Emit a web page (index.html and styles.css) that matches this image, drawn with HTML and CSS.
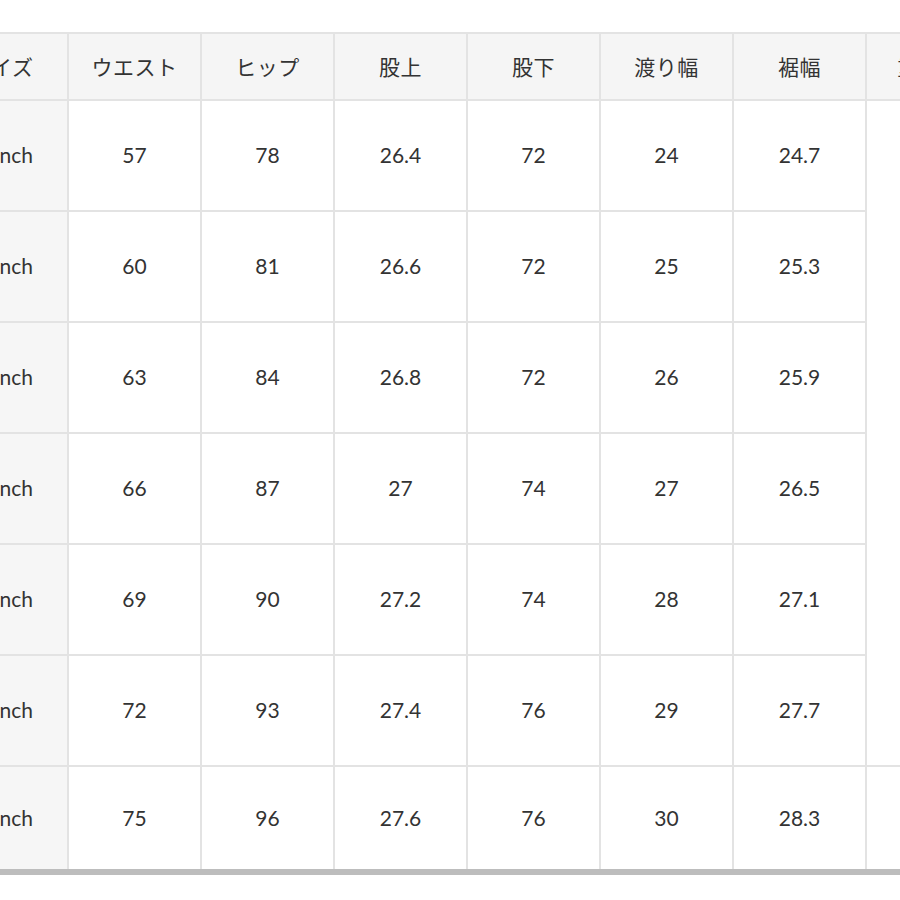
FILE: index.html
```html
<!DOCTYPE html>
<html lang="ja">
<head>
<meta charset="utf-8">
<link rel="stylesheet" href="styles.css">
</head>
<body>
<div class="viewport">
  <table class="chart">
    <colgroup>
      <col class="c"><col class="c"><col class="c"><col class="c"><col class="c"><col class="c"><col class="c"><col class="c">
    </colgroup>
    <thead>
      <tr>
        <th>サイズ</th><th>ウエスト</th><th>ヒップ</th><th>股上</th><th>股下</th><th>渡り幅</th><th>裾幅</th><th>重量(g)</th>
      </tr>
    </thead>
    <tbody>
      <tr><td class="size">22inch</td><td>57</td><td>78</td><td>26.4</td><td>72</td><td>24</td><td>24.7</td><td class="merged" rowspan="6"></td></tr>
      <tr><td class="size">23inch</td><td>60</td><td>81</td><td>26.6</td><td>72</td><td>25</td><td>25.3</td></tr>
      <tr><td class="size">24inch</td><td>63</td><td>84</td><td>26.8</td><td>72</td><td>26</td><td>25.9</td></tr>
      <tr><td class="size">25inch</td><td>66</td><td>87</td><td>27</td><td>74</td><td>27</td><td>26.5</td></tr>
      <tr><td class="size">26inch</td><td>69</td><td>90</td><td>27.2</td><td>74</td><td>28</td><td>27.1</td></tr>
      <tr><td class="size">27inch</td><td>72</td><td>93</td><td>27.4</td><td>76</td><td>29</td><td>27.7</td></tr>
      <tr class="last"><td class="size">28inch</td><td>75</td><td>96</td><td>27.6</td><td>76</td><td>30</td><td>28.3</td><td></td></tr>
    </tbody>
  </table>
</div>
</body>
</html>
```

FILE: styles.css
```css
html, body {
  margin: 0;
  padding: 0;
  background: #ffffff;
}

.viewport {
  width: 900px;
  height: 900px;
  overflow: hidden;
  padding-top: 32px;
  box-sizing: border-box;
}

.chart {
  width: 1066px;
  margin-left: -66px;
  border-collapse: collapse;
  table-layout: fixed;
  font-family: "Lato", "Noto Sans CJK JP", sans-serif;
  color: #333333;
  font-size: 21px;
}

.chart col.c {
  width: 133px;
}

.chart th,
.chart td {
  border: 2px solid #e3e3e3;
  text-align: center;
  vertical-align: middle;
  padding: 0;
  white-space: nowrap;
}

.chart th {
  height: 64px;
  background: #f5f5f5;
  font-family: "Noto Sans CJK JP", sans-serif;
  font-weight: 400;
  font-size: 21px;
  letter-spacing: 0.5px;
  padding-bottom: 1px;
}

.chart td {
  height: 107px;
  background: #ffffff;
  padding-bottom: 2px;
}

.chart td.size {
  background: #f6f6f6;
}

.chart tr.last td {
  height: 100px;
  border-bottom: 6px solid #bdbdbd;
}
```
